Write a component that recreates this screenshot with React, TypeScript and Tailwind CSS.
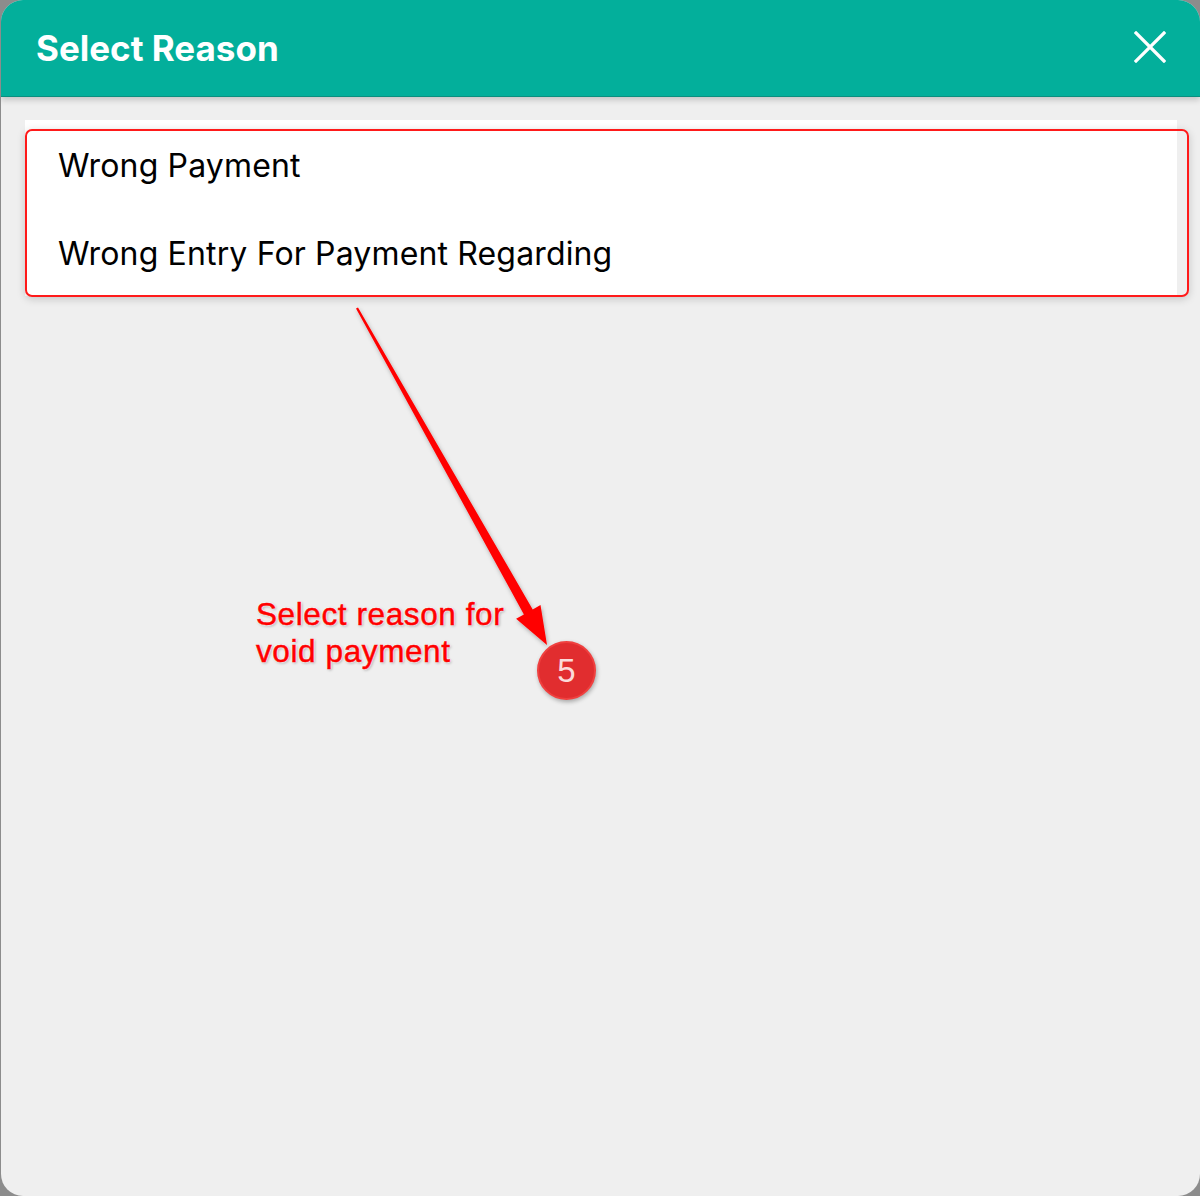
const REASONS = ['Wrong Payment', 'Wrong Entry For Payment Regarding'];

export default function App() {
  return (
    <div className="w-[1200px] h-[1196px] bg-[#8c8c8c] overflow-hidden">
      <div className="relative ml-px h-full rounded-[22px] bg-[#efefef] overflow-hidden flex flex-col font-['Inter',sans-serif]">
        {/* Header */}
        <div className="h-[97px] shrink-0 bg-[#03af9b] border-b border-[#0b8f7f] shadow-[0_3px_6px_rgba(0,0,0,0.18)] flex items-center justify-between pl-[35px] pr-[34px] z-10">
          <h2 className="text-[35px] font-bold text-white tracking-[0px]">Select Reason</h2>
          <svg width="32" height="32" viewBox="0 0 32 32" className="mb-[2px]">
            <path d="M2 2 L30 30 M30 2 L2 30" stroke="white" strokeWidth="3.2" strokeLinecap="square" />
          </svg>
        </div>

        {/* List */}
        <div className="pt-[23px] pl-[24px] pr-[23px]">
          <div className="bg-white">
            {REASONS.map((r) => (
              <div key={r} className="h-[88px] flex items-center pl-[33px] pt-[3px] text-[32px] text-black tracking-[0.15px]">
                {r}
              </div>
            ))}
          </div>
        </div>

        {/* Annotation: highlight box */}
        <div className="absolute left-[24px] top-[129px] w-[1164px] h-[168px] border-2 border-[#ff1a1a] rounded-[7px] shadow-[0_2px_8px_rgba(0,0,0,0.18)]" />

        {/* Annotation: arrow */}
        <svg className="absolute left-0 top-0" width="1200" height="1196" viewBox="0 0 1200 1196">
          <defs>
            <filter id="sh" x="-20%" y="-20%" width="140%" height="140%">
              <feDropShadow dx="1" dy="2" stdDeviation="2" floodColor="#000" floodOpacity="0.3" />
            </filter>
          </defs>
          <polygon
            points="355,308.6 522.9,614.4 515.1,618.8 546,645 539.5,605 531.7,609.4 357,307.4"
            fill="#ff0000"
            filter="url(#sh)"
          />
        </svg>

        {/* Annotation: label */}
        <div className="absolute left-[255px] top-[596px] font-['Liberation_Sans',Arial,sans-serif] text-[31.5px] leading-[37px] tracking-[0.6px] text-[#ff0000] [-webkit-text-stroke:0.5px_#ff0000] [text-shadow:0_0_2px_#fff,0_0_2px_#fff,0_0_2px_#fff,1px_1px_3px_rgba(0,0,0,0.4)]">
          Select reason for
          <br />
          void payment
        </div>

        {/* Annotation: step badge */}
        <div className="absolute left-[536px] top-[641px] w-[59px] h-[59px] rounded-full bg-[#e12d2f] border-2 border-[#f0403f] shadow-[1px_2px_4px_rgba(0,0,0,0.3)] flex items-center justify-center font-['Liberation_Sans',Arial,sans-serif] text-[33px] text-[#fbdada]">
          5
        </div>
      </div>
    </div>
  );
}
